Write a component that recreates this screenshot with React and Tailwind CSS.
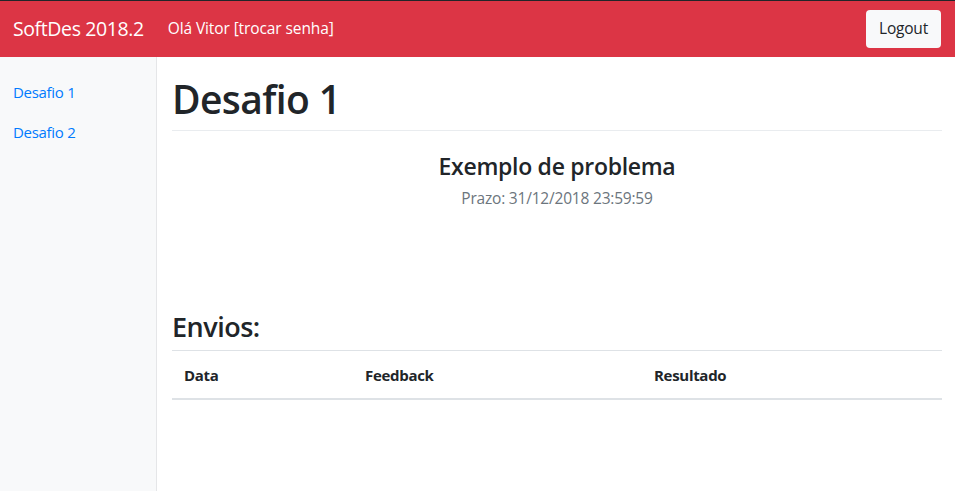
export default function App() {
  const font = { fontFamily: '"Open Sans", "Noto Sans", sans-serif' };

  return (
    <div className="min-h-screen flex flex-col bg-white text-[#212529]" style={font}>
      {/* Navbar */}
      <nav className="h-[57px] border-t border-[#212529] bg-[#dc3545] flex items-center justify-between pl-[13px] pr-[14px] shrink-0">
        <div className="flex items-center">
          <span className="text-[19.5px] text-white tracking-[-0.4px]">SoftDes 2018.2</span>
          <span className="ml-[24px] text-[15.5px] text-white tracking-[-0.1px]">
            Olá Vitor [trocar senha]
          </span>
        </div>
        <button className="h-[38px] px-[13px] rounded-[4px] bg-[#f8f9fa] text-[15.5px] text-[#212529] tracking-[-0.2px]">
          Logout
        </button>
      </nav>

      <div className="flex flex-1 h-[434px]">
        {/* Sidebar */}
        <aside className="w-[157px] shrink-0 bg-[#f8f9fa] border-r border-[#e5e6e8] pt-[24px] pl-[13px]">
          <ul className="flex flex-col gap-[18px]">
            <li className="text-[15px] text-[#007bff] tracking-[-0.3px] leading-[22px]">Desafio 1</li>
            <li className="text-[15px] text-[#007bff] tracking-[-0.3px] leading-[22px]">Desafio 2</li>
          </ul>
        </aside>

        {/* Main */}
        <main className="flex-1 pl-[15px] pr-[13px]">
          <h1 className="text-[39px] font-semibold leading-[48px] mt-[18px] pb-[7px] border-b border-[#e9ecef] tracking-[-0.6px]">
            Desafio 1
          </h1>

          <div className="text-center mt-[20px]">
            <h4 className="text-[23px] font-semibold leading-[30px] tracking-[-0.3px]">Exemplo de problema</h4>
            <p className="text-[15.5px] text-[#6c757d] mt-[6px] tracking-[-0.2px]">Prazo: 31/12/2018 23:59:59</p>
          </div>

          <h3 className="text-[27px] font-semibold leading-[34px] mt-[100px] pb-[6px] border-b border-[#dee2e6] tracking-[-0.5px]">
            Envios:
          </h3>

          <table className="w-full text-left border-collapse">
            <thead>
              <tr className="border-b-2 border-[#dee2e6]">
                <th className="w-[181px] px-[12px] h-[48px] text-[15px] font-bold tracking-[-0.3px]">Data</th>
                <th className="w-[289px] px-[12px] h-[48px] text-[15px] font-bold tracking-[-0.3px]">Feedback</th>
                <th className="px-[12px] h-[48px] text-[15px] font-bold tracking-[-0.3px]">Resultado</th>
              </tr>
            </thead>
          </table>
        </main>
      </div>
    </div>
  );
}
